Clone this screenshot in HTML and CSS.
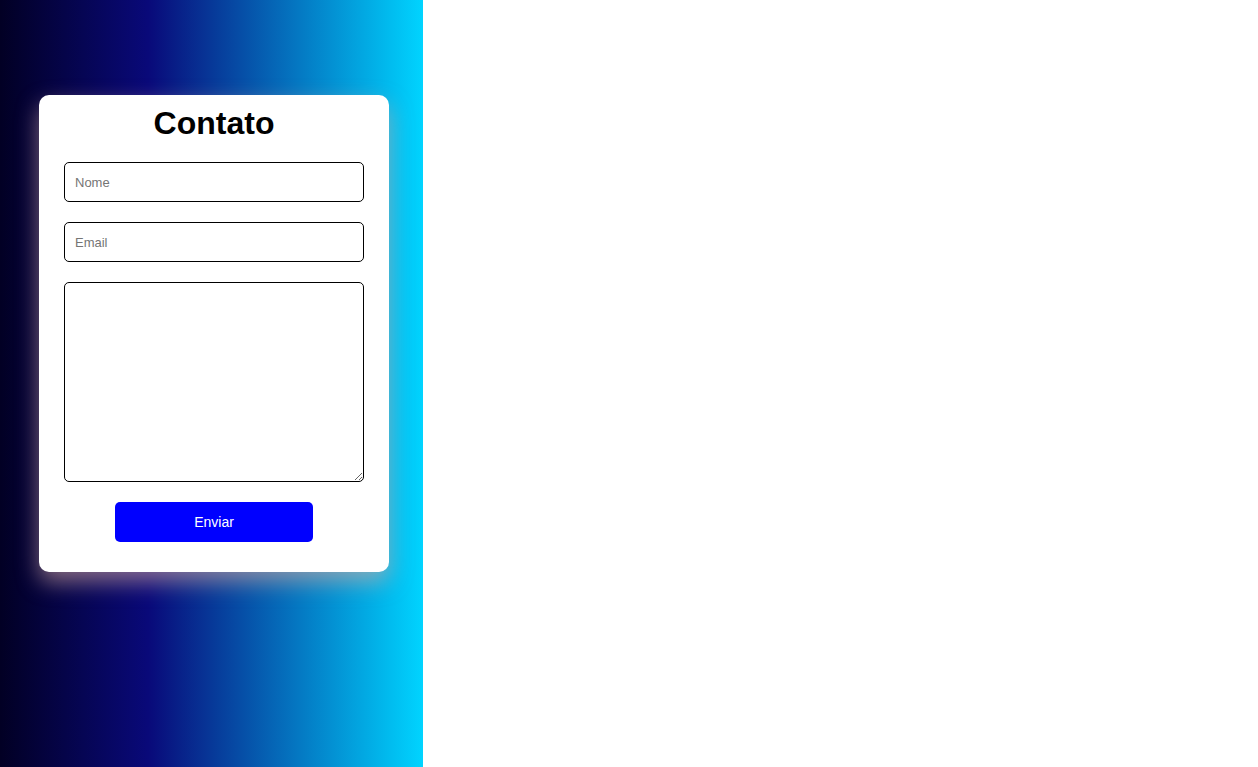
FILE: index.html
```html
<!DOCTYPE html>
<html lang="pt">
<head>
<meta charset="utf-8">
<title>Contato</title>
<link rel="stylesheet" href="styles.css">
</head>
<body>
<div class="page">
  <section class="panel">
    <form class="card">
      <h1 class="title">Contato</h1>
      <input class="field" type="text" placeholder="Nome">
      <input class="field" type="email" placeholder="Email">
      <textarea class="field area"></textarea>
      <button class="send" type="button">Enviar</button>
    </form>
  </section>
  <main class="blank"></main>
</div>
</body>
</html>
```
FILE: styles.css
```css
* { box-sizing: border-box; }
html, body { margin: 0; height: 100%; }
body {
  font-family: "Liberation Sans", Arial, sans-serif;
  background: #fff;
}
.page {
  display: flex;
  height: 100vh;
}
.panel {
  width: 423px;
  flex: none;
  height: 100%;
  background: linear-gradient(90deg, rgba(2,0,36,1) 0%, rgba(9,9,121,1) 35%, rgba(0,212,255,1) 100%);
  padding: 95px 0 0 39px;
}
.card {
  width: 350px;
  background: #fff;
  border-radius: 10px;
  padding: 10px 25px 30px;
  display: flex;
  flex-direction: column;
  gap: 20px;
  box-shadow: 0 10px 22px rgba(215, 170, 160, 0.6);
}
.title {
  margin: 0;
  text-align: center;
  font-size: 32px;
  font-weight: bold;
  line-height: 37px;
  color: #000;
}
.field {
  display: block;
  width: 300px;
  height: 40px;
  border: 1px solid #000;
  border-radius: 5px;
  padding: 0 10px;
  font-family: "Liberation Sans", Arial, sans-serif;
  font-size: 13px;
  color: #000;
  background: #fff;
  outline: none;
}
.field::placeholder { color: #757575; }
.area {
  height: 200px;
  padding: 10px;
  resize: vertical;
}
.send {
  align-self: center;
  width: 198px;
  height: 40px;
  border: none;
  border-radius: 5px;
  background: #0000ff;
  color: #fff;
  font-family: "Liberation Sans", Arial, sans-serif;
  font-size: 14px;
  cursor: pointer;
}
.blank { flex: 1; background: #fff; }
```
